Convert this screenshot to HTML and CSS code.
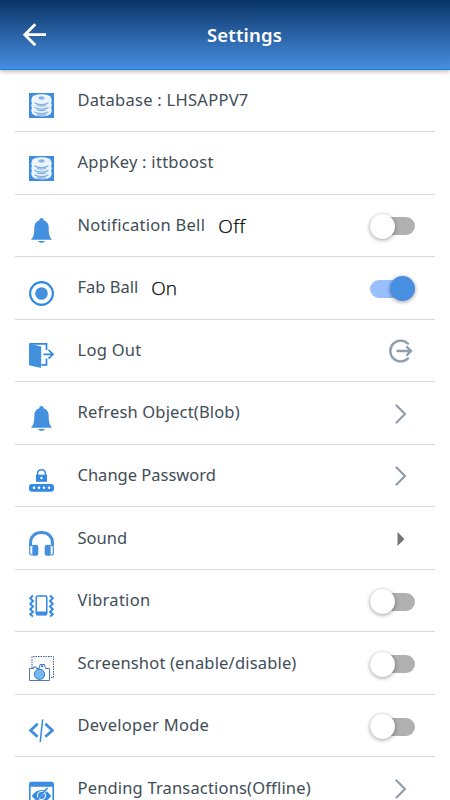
FILE: index.html
```html
<!DOCTYPE html>
<html lang="en">
<head>
<meta charset="UTF-8">
<meta name="viewport" content="width=device-width, initial-scale=1.0">
<title>Settings</title>
<link rel="stylesheet" href="styles.css">
</head>
<body>

<svg class="sprite">
  <symbol id="database" viewBox="0 0 25 25">
    <path fill="#3f8de0" d="M0 0h25v25H0z"/>
    <path fill="#edf4fc" d="M3 5c0-5 19-5 19 0 1 2 1 3 0 5 1 2 1 3 0 5 1 2 1 3 0 5-1 4.500-18 4.500-19 0-1-2-1-3 0-5-1-2-1-3 0-5-1-2-1-3 0-5z"/>
    <path fill="none" stroke="#7eb0e6" stroke-width="1.200" d="M5.500 9.700c3 2.600 11 2.600 14 0M5.500 14.200c3 2.600 11 2.600 14 0M5.500 18.700c3 2.600 11 2.600 14 0M8 12.500c3 .8 6 .8 9 0M8 17c3 .8 6 .8 9 0M8 21.600c3 .8 6 .8 9 0"/>
    <ellipse cx="12.500" cy="5" rx="3" ry="1.700" fill="#86b5e8"/>
  </symbol>
  <symbol id="bell" viewBox="0 0 25 25">
    <path fill="#4390df" d="M12.500 0c1.400 0 2.100.9 2.100 2.300C18 3.300 19.700 6 19.700 9.500c0 6.500.6 9 3.300 12.300H2C4.700 18.500 5.300 16 5.300 9.500c0-3.500 1.700-6.200 5.100-7.200C10.400.9 11.100 0 12.500 0zM9 23h7c-.6 2.400-6.400 2.400-7 0z"/>
  </symbol>
  <symbol id="ball" viewBox="0 0 25 25">
    <circle cx="12.500" cy="12.500" r="11.400" fill="none" stroke="#2f89e3" stroke-width="2.100"/>
    <circle cx="12.500" cy="12.500" r="6.300" fill="#4390df"/>
  </symbol>
  <symbol id="door" viewBox="0 0 25 25">
    <path fill="#4390df" d="M0 0.500l12.200 3V25L0 22.300z"/>
    <path fill="none" stroke="#2f89e3" stroke-width="1.700" d="M.7.900h16.800V7M17.500 15.500v6.300h-5M14.500 11.300h9M19.500 7l4.500 4.300-4.500 4.300"/>
  </symbol>
  <symbol id="password" viewBox="0 0 25 25">
    <path fill="none" stroke="#3489e2" stroke-width="1.500" d="M8.600 7.500V5.500c0-5 7.800-5 7.800 0v2"/>
    <path fill="#3489e2" d="M7 6.700h11v7.100H7z"/>
    <rect y="16" width="25" height="7.700" rx="3" fill="#3489e2"/>
    <g fill="#fff">
      <circle cx="12.500" cy="10" r="1.200"/>
      <circle cx="5" cy="19.800" r="1.300"/><circle cx="10" cy="19.800" r="1.300"/>
      <circle cx="15" cy="19.800" r="1.300"/><circle cx="20" cy="19.800" r="1.300"/>
    </g>
  </symbol>
  <symbol id="headphones" viewBox="0 0 25 25">
    <path fill="none" stroke="#4390df" stroke-width="3" d="M1.600 15v-3.500C1.600 5 6.500 1.600 12.500 1.600S23.400 5 23.400 11.500V15"/>
    <rect x=".7" y="14.500" width="5" height="9.500" rx="2" fill="#fff" stroke="#4390df" stroke-width="1.200"/>
    <rect x="19.300" y="14.500" width="5" height="9.500" rx="2" fill="#fff" stroke="#4390df" stroke-width="1.200"/>
    <rect x="3.300" y="13.800" width="6" height="11" rx="2.200" fill="#4390df"/>
    <rect x="15.700" y="13.800" width="6" height="11" rx="2.200" fill="#4390df"/>
  </symbol>
  <symbol id="vibrate" viewBox="0 0 25 25">
    <rect x="7.200" y="2" width="10.600" height="18.800" rx="1.600" fill="none" stroke="#2f89e3" stroke-width="1.500"/>
    <path fill="#3d8ee1" d="M7 17.500h11v3.700H7z"/>
    <path fill="none" stroke="#2f89e3" stroke-width="1.900" d="M4 1.500L1.200 4.200 4 7 1.200 9.800 4 12.500l-2.800 2.700L4 18l-2.800 2.200L4 22.500M21 1.500l2.800 2.700L21 7l2.800 2.800-2.800 2.700 2.800 2.700L21 18l2.800 2.200-2.800 2.300"/>
  </symbol>
  <symbol id="camera" viewBox="0 0 25 25">
    <path fill="none" stroke="#375f9b" stroke-dasharray="1.500 1" d="M3 12V.5h21.500v21H21"/>
    <path fill="#fff" stroke="#4e79b5" d="M.5 24.500v-12h4v-1.500h3v1.500h2.700l.8-4h4.500l1 4h4v12z"/>
    <path fill="#2c82d7" d="M12 9.300h2.300v1.800H12z"/>
    <circle cx="10.500" cy="18.300" r="5.100" fill="#74b8ee" stroke="#2f78c7"/>
  </symbol>
  <symbol id="code" viewBox="0 0 25 25">
    <path fill="none" stroke="#3e8de0" stroke-width="2.700" d="M8.700 4.700L1.500 11.500l7.200 6.300M16.300 4.700l7.200 6.800-7.200 6.300"/>
    <path fill="none" stroke="#2f89e3" stroke-width="1.500" d="M13.700.3L11.200 23"/>
  </symbol>
  <symbol id="offline" viewBox="0 0 25 25">
    <rect x=".8" y="1.600" width="23.400" height="24" rx="2" fill="#fff" stroke="#3489e2" stroke-width="1.600"/>
    <path fill="#3f8de0" d="M1 2h23v3.800H1z"/>
    <path fill="#3489e2" d="M2.800 15c5-8 14.400-8 19.400 0-5 7.500-14.400 7.500-19.400 0z"/>
    <circle cx="12.500" cy="14.500" r="4" fill="none" stroke="#fff" stroke-width="1.200"/>
    <path stroke="#fff" stroke-width="1.500" d="M20 6.500l-15 15"/>
    <path stroke="#3489e2" stroke-width="1.600" d="M18.500 7l-13 14"/>
  </symbol>
  <symbol id="chevron" viewBox="0 0 12 20">
    <path fill="none" stroke="#919dad" stroke-width="2.200" stroke-linecap="round" stroke-linejoin="round" d="M1.500 1.500L10 10l-8.500 8.500"/>
  </symbol>
</svg>

<header class="header">
  <svg class="back" viewBox="0 0 24 24"><path d="M12.300 1.300L1.800 11.700l10.500 10.500M1.800 11.700H23"/></svg>
  <h1 class="title">Settings</h1>
</header>

<main class="list">
  <div class="item">
    <svg class="icon"><use href="#database"/></svg>
    <span class="label wide">Database : LHSAPPV7</span>
  </div>
  <div class="item">
    <svg class="icon"><use href="#database"/></svg>
    <span class="label wide">AppKey : ittboost</span>
  </div>
  <div class="item">
    <svg class="icon"><use href="#bell"/></svg>
    <span class="label wide">Notification Bell</span>
    <span class="state off">Off</span>
    <span class="toggle"></span>
  </div>
  <div class="item">
    <svg class="icon"><use href="#ball"/></svg>
    <span class="label">Fab Ball</span>
    <span class="state">On</span>
    <span class="toggle on"></span>
  </div>
  <div class="item">
    <svg class="icon"><use href="#door"/></svg>
    <span class="label wide">Log Out</span>
    <svg class="exit" viewBox="0 0 24 24"><path d="M19 4.600A10.400 10.400 0 1 0 19 19.400M8.500 12h13M18 8l4 4-4 4"/></svg>
  </div>
  <div class="item">
    <svg class="icon"><use href="#bell"/></svg>
    <span class="label medium">Refresh Object(Blob)</span>
    <svg class="chevron"><use href="#chevron"/></svg>
  </div>
  <div class="item">
    <svg class="icon"><use href="#password"/></svg>
    <span class="label">Change Password</span>
    <svg class="chevron"><use href="#chevron"/></svg>
  </div>
  <div class="item">
    <svg class="icon"><use href="#headphones"/></svg>
    <span class="label">Sound</span>
    <svg class="arrow" viewBox="0 0 8 14"><path d="M.5 0L7.500 7l-7 7z"/></svg>
  </div>
  <div class="item">
    <svg class="icon"><use href="#vibrate"/></svg>
    <span class="label wide">Vibration</span>
    <span class="toggle"></span>
  </div>
  <div class="item">
    <svg class="icon"><use href="#camera"/></svg>
    <span class="label medium">Screenshot (enable/disable)</span>
    <span class="toggle"></span>
  </div>
  <div class="item">
    <svg class="icon"><use href="#code"/></svg>
    <span class="label wide">Developer Mode</span>
    <span class="toggle"></span>
  </div>
  <div class="item">
    <svg class="icon"><use href="#offline"/></svg>
    <span class="label medium">Pending Transactions(Offline)</span>
    <svg class="chevron"><use href="#chevron"/></svg>
  </div>
</main>

</body>
</html>
```

FILE: styles.css
```css
* {
  box-sizing: border-box;
}

body {
  margin: 0;
  height: 800px;
  overflow: hidden;
  background-color: #fff;
  font-family: "Noto Sans", "Open Sans", sans-serif;
}

.sprite {
  display: none;
}

.header {
  display: flex;
  align-items: center;
  height: 70px;
  padding-left: 23px;
  background: linear-gradient(#083466, #2a62a5 50%, #478ee0);
  border-bottom: 1px solid #1683df;
  box-shadow: 0 1px 5px rgba(0, 0, 0, 0.35);
}

.back {
  width: 24px;
  height: 24px;
  fill: none;
  stroke: #fff;
  stroke-width: 2.800;
}

.title {
  margin: 0 0 0 160px;
  color: #fff;
  font-size: 18.5px;
  font-weight: 600;
  line-height: 26px;
  letter-spacing: 0.15px;
}

.list {
  margin-top: -0.6px;
  padding: 0 15px;
}

.item {
  display: flex;
  align-items: center;
  height: 62.55px;
  padding: 0 20px 0 14px;
  border-bottom: 1px solid #d9d9d9;
}

.icon {
  width: 25px;
  height: 25px;
  margin: 11px 23.5px 0 0;
}

.label {
  margin-top: -1px;
  color: #414d57;
  font-size: 16.5px;
  line-height: 24px;
  white-space: nowrap;
}

.label.wide {
  letter-spacing: 0.27px;
}

.label.medium {
  letter-spacing: 0.17px;
}

.state {
  margin: 1px 0 0 13px;
  color: #000;
  font-family: "Open Sans", sans-serif;
  font-size: 19px;
  font-weight: 300;
  line-height: 24px;
  -webkit-text-stroke: 0.25px #000;
}

.state.off {
  letter-spacing: 0.6px;
}

.toggle {
  display: flex;
  align-items: center;
  width: 45px;
  height: 18px;
  margin: 2px 0 0 auto;
  border-radius: 9px;
  background-color: #b0b0b0;
}

.toggle::before {
  content: "";
  width: 25px;
  height: 25px;
  flex-shrink: 0;
  border-radius: 50%;
  background-color: #fff;
  box-shadow: 0 1px 4px rgba(0, 0, 0, 0.4);
}

.toggle.on {
  justify-content: flex-end;
  background-color: #9abfff;
}

.toggle.on::before {
  background-color: #488fe1;
}

.exit {
  width: 24px;
  height: 24px;
  margin: 2px 2px 0 auto;
  fill: none;
  stroke: #919dad;
  stroke-width: 2.400;
  stroke-linecap: round;
}

.chevron {
  width: 12px;
  height: 20px;
  margin: 2px 8.5px 0 auto;
}

.arrow {
  width: 8px;
  height: 14px;
  margin: 2px 10.5px 0 auto;
  fill: #757575;
}
```
